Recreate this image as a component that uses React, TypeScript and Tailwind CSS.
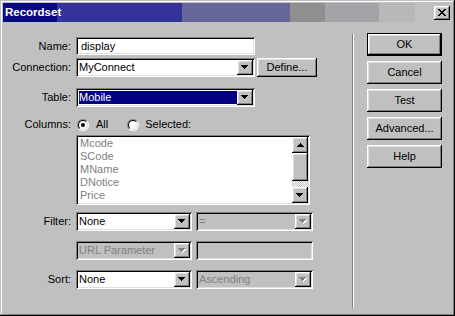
import React from "react";

const sunken =
  "shadow-[inset_1px_1px_#808080,inset_-1px_-1px_#ffffff,inset_2px_2px_#000000,inset_-2px_-2px_#dfdfdf]";
const raised =
  "shadow-[inset_-1px_-1px_#000000,inset_1px_1px_#ffffff,inset_-2px_-2px_#808080,inset_2px_2px_#dfdfdf]";

function DownArrow({ disabled = false }: { disabled?: boolean }) {
  const d = "M0 0h7v1H0z M1 1h5v1H1z M2 2h3v1H2z M3 3h1v1H3z";
  return (
    <svg width="8" height="5" viewBox="0 0 8 5" shapeRendering="crispEdges">
      {disabled && <path d={d} fill="#ffffff" transform="translate(1 1)" />}
      <path d={d} fill={disabled ? "#808080" : "#000000"} />
    </svg>
  );
}

function UpArrow() {
  return (
    <svg width="7" height="4" viewBox="0 0 7 4" shapeRendering="crispEdges">
      <path d="M3 0h1v1H3z M2 1h3v1H2z M1 2h5v1H1z M0 3h7v1H0z" fill="#000000" />
    </svg>
  );
}

function CloseX() {
  return (
    <svg width="8" height="7" viewBox="0 0 8 7" shapeRendering="crispEdges">
      <path
        d="M0 0h2v1H0z M6 0h2v1H6z M1 1h2v1H1z M5 1h2v1H5z M2 2h4v1H2z M3 3h2v1H3z M2 4h4v1H2z M1 5h2v1H1z M5 5h2v1H5z M0 6h2v1H0z M6 6h2v1H6z"
        fill="#000000"
      />
    </svg>
  );
}

function Combo({
  className,
  value,
  disabled = false,
  selected = false,
}: {
  className: string;
  value: string;
  disabled?: boolean;
  selected?: boolean;
}) {
  return (
    <div
      className={`flex h-[19px] p-[2px] ${sunken} ${disabled ? "bg-[#c0c0c0]" : "bg-white"} ${className}`}
    >
      <div className="flex min-w-0 flex-1 items-stretch py-[1px] pl-[1px]">
        <div
          className={`flex flex-1 items-center whitespace-nowrap leading-none ${
            selected ? "bg-[#000080] text-white" : disabled ? "text-[#808080]" : "text-black"
          }`}
        >
          {value}
        </div>
      </div>
      <div className={`flex h-full w-[16px] items-center justify-center bg-[#c0c0c0] ${raised}`}>
        <DownArrow disabled={disabled} />
      </div>
    </div>
  );
}

function Radio({ checked }: { checked: boolean }) {
  return (
    <div className="h-[12px] w-[12px] rounded-full border border-t-[#808080] border-l-[#808080] border-b-white border-r-white">
      <div className="flex h-full w-full items-center justify-center rounded-full border border-t-black border-l-black border-b-[#dfdfdf] border-r-[#dfdfdf] bg-white">
        {checked && <div className="h-[4px] w-[4px] rounded-full bg-black" />}
      </div>
    </div>
  );
}

function Label({ text }: { text: string }) {
  return <div className="w-[68px] shrink-0 text-right">{text}</div>;
}

function Button({ text, isDefault = false }: { text: string; isDefault?: boolean }) {
  return (
    <div className={`h-[23px] w-[75px] ${isDefault ? "border border-black" : ""}`}>
      <div className={`flex h-full w-full items-center justify-center bg-[#c0c0c0] ${raised}`}>
        {text}
      </div>
    </div>
  );
}

export default function App() {
  const columns = ["Mcode", "SCode", "MName", "DNotice", "Price"];
  return (
    <div
      className="flex h-[316px] w-[455px] flex-col bg-[#c0c0c0] p-[3px] font-['Liberation_Sans',Arial,sans-serif] text-[11px] text-black shadow-[inset_-1px_-1px_#000000,inset_1px_1px_#c0c0c0,inset_-2px_-2px_#808080,inset_2px_2px_#ffffff]"
    >
      {/* Title bar */}
      <div className="flex h-[19px] shrink-0 items-center justify-between bg-[linear-gradient(to_right,#0a0a80_0px,#0a0a80_54px,#333399_54px,#333399_179px,#666699_179px,#666699_287px,#8f8f8f_287px,#8f8f8f_322px,#a3a3a8_322px,#a3a3a8_376px,#b8b8b8_376px,#b8b8b8_412px,#c0c0c0_412px)] pl-[2px] pr-[2px]">
        <span className="text-[11.5px] font-bold leading-none text-white">Recordset</span>
        <div className={`flex h-[14px] w-[16px] items-center justify-center bg-[#c0c0c0] ${raised}`}>
          <CloseX />
        </div>
      </div>

      {/* Body */}
      <div className="flex flex-1">
        {/* Form */}
        <div className="flex w-[349px] shrink-0 flex-col">
          <div className="mt-[15px] flex h-[18px] items-center">
            <Label text="Name:" />
            <div className={`ml-[5px] flex h-[18px] w-[179px] items-center bg-white pl-[5px] ${sunken}`}>
              display
            </div>
          </div>

          <div className="mt-[3px] flex h-[19px] items-center">
            <Label text="Connection:" />
            <Combo className="ml-[5px] w-[179px]" value="MyConnect" />
            <div className={`ml-[2px] flex h-[19px] w-[60px] items-center justify-center bg-[#c0c0c0] ${raised}`}>
              Define...
            </div>
          </div>

          <div className="mt-[11px] flex h-[19px] items-center">
            <Label text="Table:" />
            <Combo className="ml-[5px] w-[179px]" value="Mobile" selected />
          </div>

          <div className="mt-[11px] flex h-[13px] items-center">
            <Label text="Columns:" />
            <div className="ml-[6px]">
              <Radio checked />
            </div>
            <span className="ml-[7px]">All</span>
            <div className="ml-[19px]">
              <Radio checked={false} />
            </div>
            <span className="ml-[6px]">Selected:</span>
          </div>

          <div className="mt-[4px] flex">
            <div className="w-[68px] shrink-0" />
            <div className={`ml-[5px] flex h-[70px] w-[234px] bg-white p-[2px] ${sunken}`}>
              <div className="flex-1 pl-[2px] text-[#808080]">
                {columns.map((c) => (
                  <div key={c} className="h-[13px] leading-[13px]">
                    {c}
                  </div>
                ))}
              </div>
              <div className="flex w-[16px] flex-col">
                <div className={`flex h-[16px] items-center justify-center bg-[#c0c0c0] ${raised}`}>
                  <UpArrow />
                </div>
                <div className={`h-[28px] bg-[#c0c0c0] ${raised}`} />
                <div className="flex-1 bg-[repeating-conic-gradient(#c0c0c0_0_25%,#ffffff_0_50%)] bg-[length:2px_2px]" />
                <div className={`flex h-[16px] items-center justify-center bg-[#c0c0c0] ${raised}`}>
                  <DownArrow />
                </div>
              </div>
            </div>
          </div>

          <div className="mt-[7px] flex h-[19px] items-center">
            <Label text="Filter:" />
            <Combo className="ml-[5px] w-[116px]" value="None" />
            <Combo className="ml-[4px] w-[117px]" value="=" disabled />
          </div>

          <div className="mt-[10px] flex h-[19px] items-center">
            <div className="w-[68px] shrink-0" />
            <Combo className="ml-[5px] w-[116px]" value="URL Parameter" disabled />
            <div className={`ml-[4px] h-[19px] w-[117px] bg-[#c0c0c0] ${sunken}`} />
          </div>

          <div className="mt-[10px] flex h-[19px] items-center">
            <Label text="Sort:" />
            <Combo className="ml-[5px] w-[116px]" value="None" />
            <Combo className="ml-[4px] w-[117px]" value="Ascending" disabled />
          </div>
        </div>

        {/* Separator */}
        <div className="mb-[5px] mt-[12px] flex w-[2px] shrink-0">
          <div className="w-[1px] bg-[#808080]" />
          <div className="w-[1px] bg-white" />
        </div>

        {/* Buttons */}
        <div className="ml-[13px] mt-[11px] flex flex-col gap-[5px]">
          <Button text="OK" isDefault />
          <Button text="Cancel" />
          <Button text="Test" />
          <Button text="Advanced..." />
          <Button text="Help" />
        </div>
      </div>
    </div>
  );
}
